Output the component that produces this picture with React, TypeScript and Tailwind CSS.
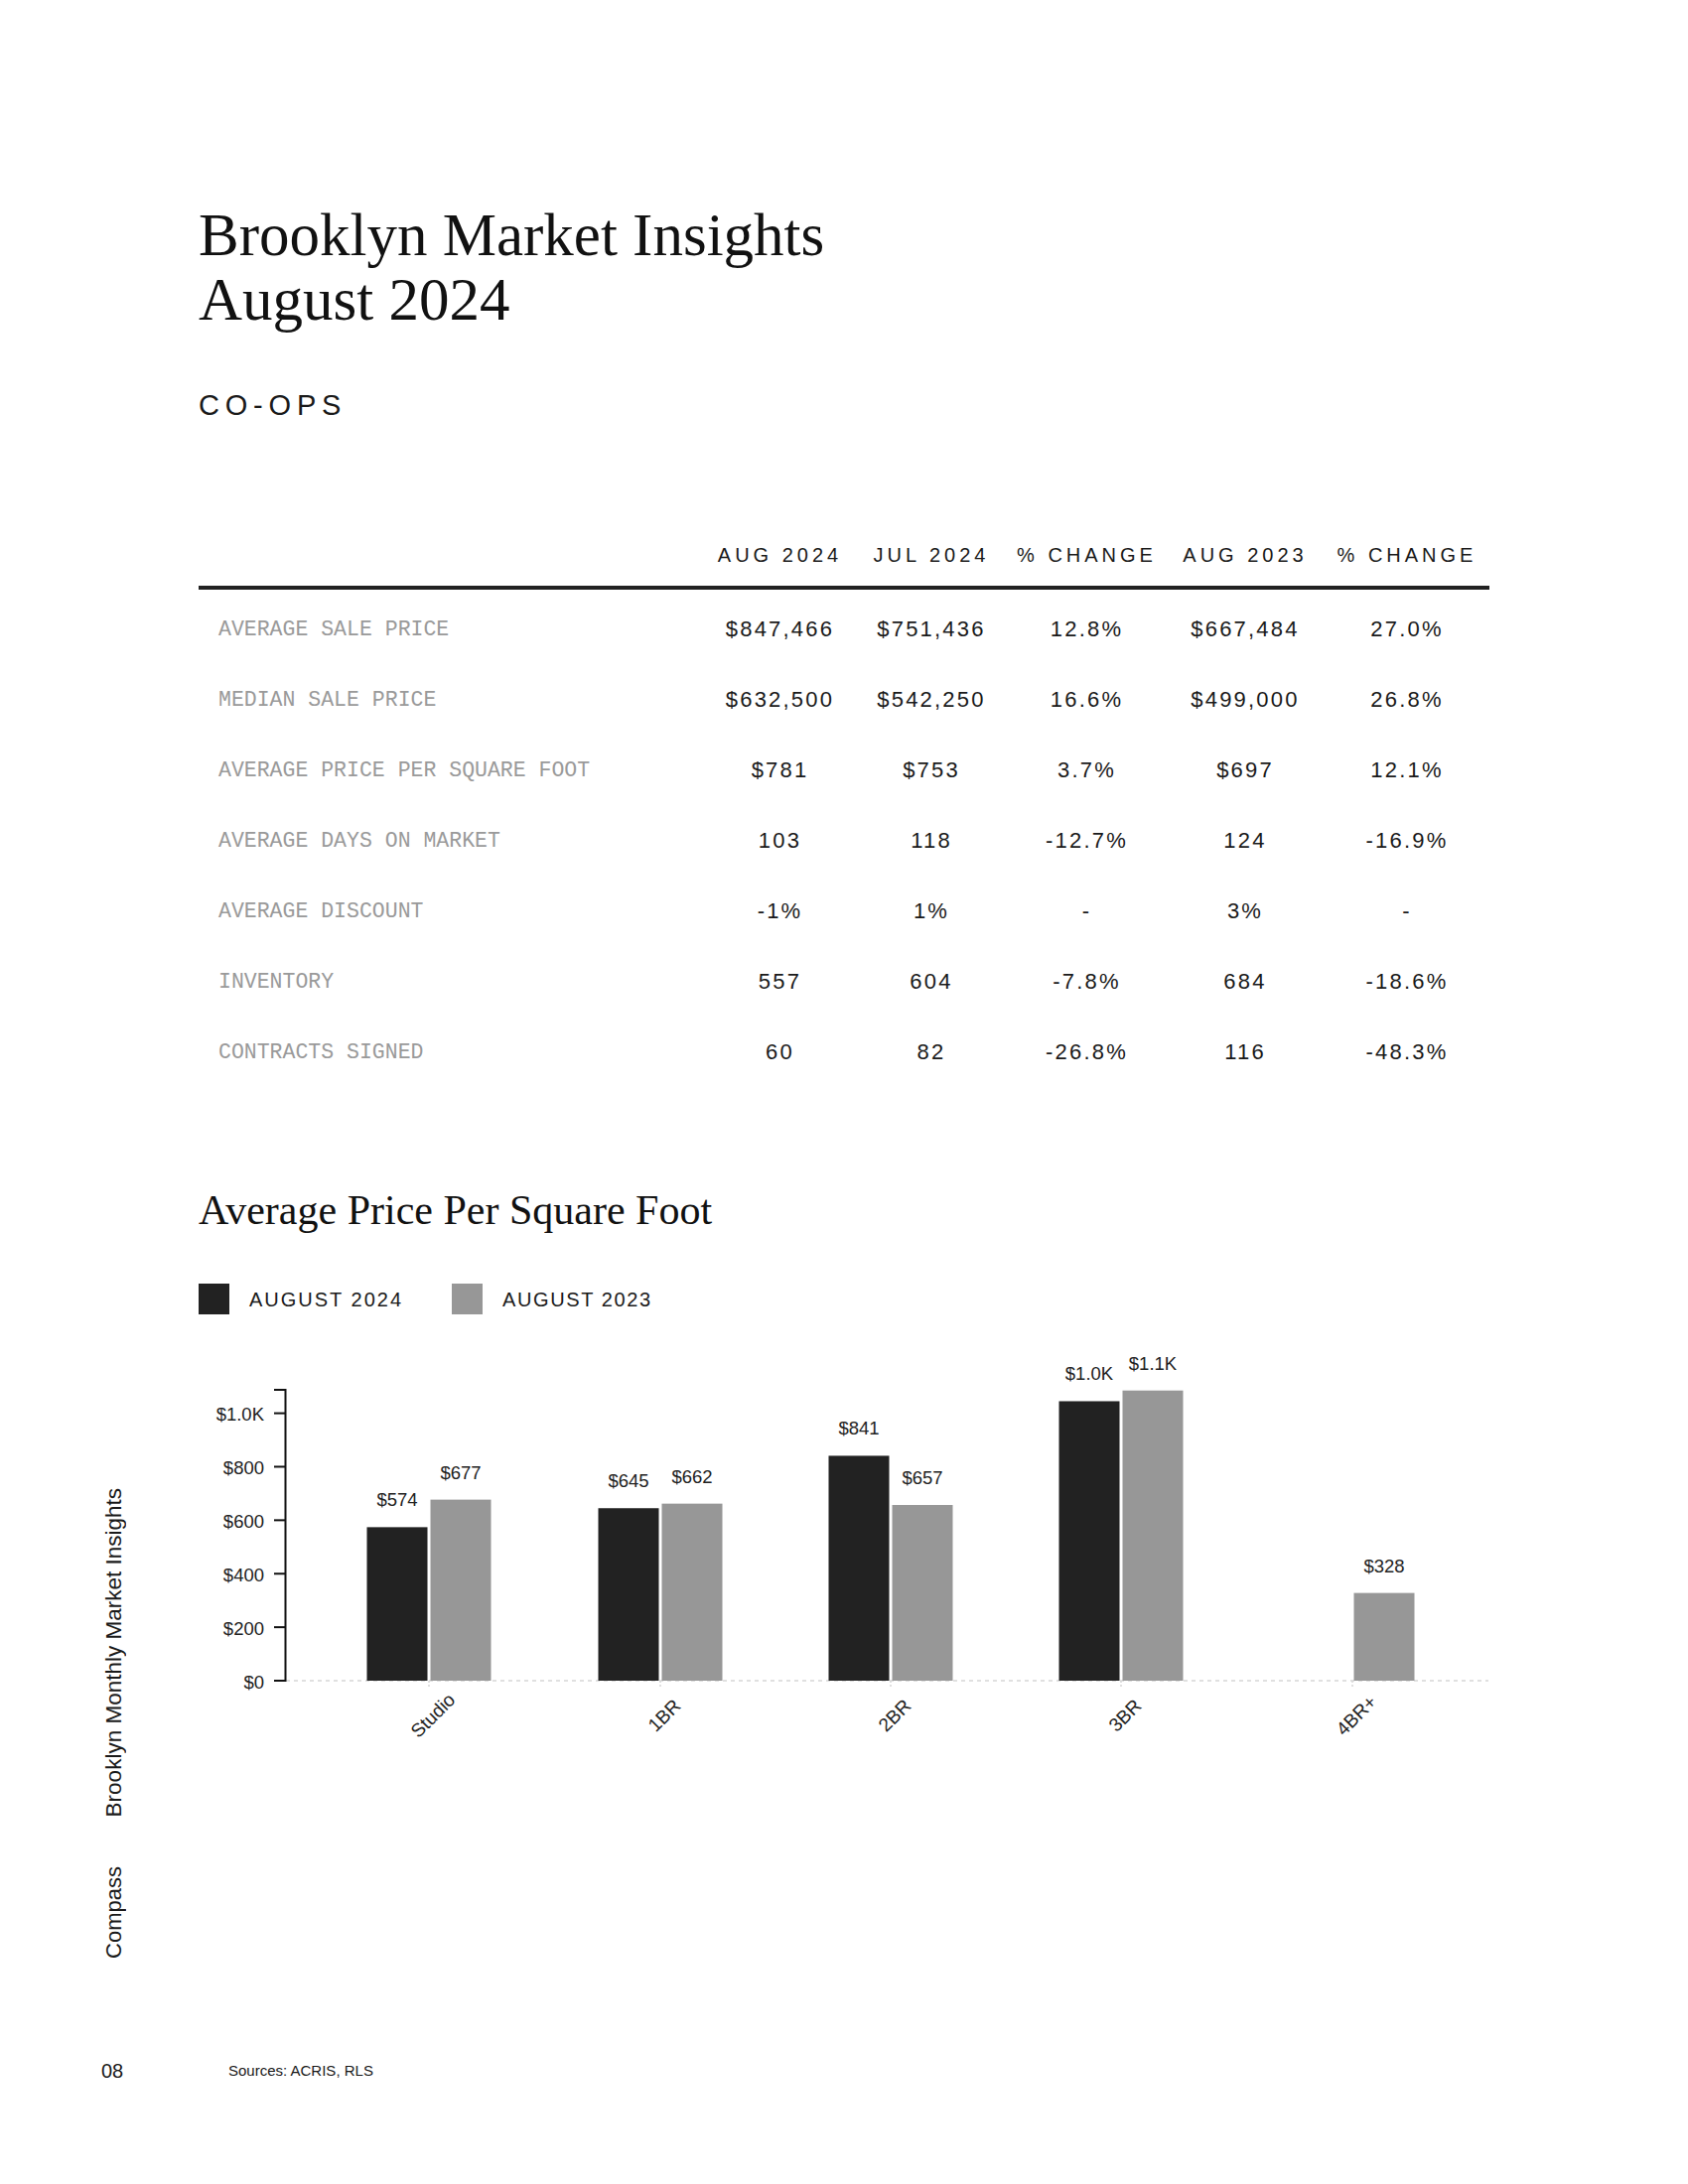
const headers = ["AUG 2024", "JUL 2024", "% CHANGE", "AUG 2023", "% CHANGE"];

const rows = [
  ["AVERAGE SALE PRICE", "$847,466", "$751,436", "12.8%", "$667,484", "27.0%"],
  ["MEDIAN SALE PRICE", "$632,500", "$542,250", "16.6%", "$499,000", "26.8%"],
  ["AVERAGE PRICE PER SQUARE FOOT", "$781", "$753", "3.7%", "$697", "12.1%"],
  ["AVERAGE DAYS ON MARKET", "103", "118", "-12.7%", "124", "-16.9%"],
  ["AVERAGE DISCOUNT", "-1%", "1%", "-", "3%", "-"],
  ["INVENTORY", "557", "604", "-7.8%", "684", "-18.6%"],
  ["CONTRACTS SIGNED", "60", "82", "-26.8%", "116", "-48.3%"],
];

const chartData = [
  { label: "Studio", cur: 574, prev: 677, curText: "$574", prevText: "$677" },
  { label: "1BR", cur: 645, prev: 662, curText: "$645", prevText: "$662" },
  { label: "2BR", cur: 841, prev: 657, curText: "$841", prevText: "$657" },
  { label: "3BR", cur: 1045, prev: 1085, curText: "$1.0K", prevText: "$1.1K" },
  { label: "4BR+", cur: null, prev: 328, curText: "", prevText: "$328" },
];

const gridCols = "grid grid-cols-[510px_151px_154px_159px_160px_166px]";

function Chart() {
  const y0 = 353;
  const k = 0.2694;
  const ticks = [0, 200, 400, 600, 800, 1000];
  const centers = [232, 465, 697, 929, 1162];
  const barW = 61;

  return (
    <svg width={1300} height={440} className="block font-['Liberation_Sans',sans-serif]">
      {/* baseline */}
      <line x1={88} x2={1299} y1={y0} y2={y0} stroke="#d6d6d6" strokeWidth={1.5} strokeDasharray="4 4" />
      {centers.map((c) => (
        <line key={c} x1={c} x2={c} y1={y0} y2={y0 + 8} stroke="#d6d6d6" strokeWidth={1.5} strokeDasharray="2 2" />
      ))}

      {/* bars */}
      {chartData.map((d, i) => {
        const c = centers[i];
        const prevTop = y0 - d.prev * k;
        return (
          <g key={d.label}>
            {d.cur !== null && (
              <>
                <rect x={c - barW - 1.5} y={y0 - d.cur * k} width={barW} height={d.cur * k} fill="#222222" />
                <text x={c - barW / 2 - 1.5} y={y0 - d.cur * k - 26} textAnchor="middle" dominantBaseline="middle" fontSize={18.5} fill="#222">
                  {d.curText}
                </text>
              </>
            )}
            <rect x={c + 1.5} y={prevTop} width={barW} height={d.prev * k} fill="#979797" />
            <text x={c + barW / 2 + 1.5} y={prevTop - 26} textAnchor="middle" dominantBaseline="middle" fontSize={18.5} fill="#222">
              {d.prevText}
            </text>
            <text
              x={c + 5}
              y={389}
              textAnchor="middle"
              dominantBaseline="middle"
              fontSize={19}
              fill="#222"
              transform={`rotate(-45 ${c + 5} 389)`}
            >
              {d.label}
            </text>
          </g>
        );
      })}

      {/* y axis */}
      <path d={`M76,60H87.5V${y0}H76`} fill="none" stroke="#111" strokeWidth={2} />
      {ticks.map((t) => {
        const y = y0 - t * k;
        return (
          <g key={t}>
            <line x1={76} x2={87.5} y1={y} y2={y} stroke="#111" strokeWidth={2} />
            <text x={66} y={y + 3} textAnchor="end" dominantBaseline="middle" fontSize={18.5} fill="#222">
              {t === 1000 ? "$1.0K" : `$${t}`}
            </text>
          </g>
        );
      })}
    </svg>
  );
}

export default function App() {
  return (
    <div className="w-[1700px] h-[2200px] bg-white text-[#1a1a1a] flex flex-col font-['Liberation_Sans',sans-serif]">
      <div className="flex h-[2040px]">
        {/* Side rail */}
        <aside className="w-[200px] pl-[30px] flex flex-col items-center justify-end gap-[50px] pb-[67px]">
          <span className="[writing-mode:vertical-rl] rotate-180 text-[22.5px] leading-[24px]">
            Brooklyn Monthly Market Insights
          </span>
          <span className="[writing-mode:vertical-rl] rotate-180 text-[22px] leading-[24px]">Compass</span>
        </aside>

        <main className="w-[1300px] pt-[204px]">
          {/* Header */}
          <h1 className="font-['Liberation_Serif',serif] text-[61px] leading-[65px] text-[#111]">
            <div>Brooklyn Market Insights</div>
            <div>August 2024</div>
          </h1>
          <div className="mt-[56px] text-[29px] leading-[36px] tracking-[0.2em]">CO-OPS</div>

          {/* Table */}
          <div className="mt-[120px]">
            <div className={`${gridCols} border-b-4 border-[#222] pb-[19px]`}>
              <div />
              {headers.map((h, i) => (
                <div key={i} className="pt-[1px] text-center text-[20px] leading-[24px] tracking-[0.2em]">
                  {h}
                </div>
              ))}
            </div>
            <div className="mt-[3px]">
              {rows.map((r) => (
                <div key={r[0]} className={`${gridCols} h-[71px] items-center`}>
                  <div className="pl-[20px] pt-[4px] font-['Liberation_Mono',monospace] text-[21.5px] text-[#9a9a9a]">{r[0]}</div>
                  {r.slice(1).map((v, i) => (
                    <div key={i} className="pt-[1px] text-center text-[22px] tracking-[0.1em] text-[#1a1a1a]">
                      {v}
                    </div>
                  ))}
                </div>
              ))}
            </div>
          </div>

          {/* Chart */}
          <h2 className="mt-[101px] font-['Liberation_Serif',serif] text-[42px] leading-[48px] text-[#111]">
            Average Price Per Square Foot
          </h2>
          <div className="mt-[50px] flex items-center h-[31px]">
            <div className="w-[31px] h-[31px] bg-[#222222]" />
            <span className="ml-[20px] text-[20px] tracking-[0.1em]">AUGUST 2024</span>
            <div className="ml-[49px] w-[31px] h-[31px] bg-[#979797]" />
            <span className="ml-[20px] text-[20px] tracking-[0.08em]">AUGUST 2023</span>
          </div>
          <div className="mt-[16px]">
            <Chart />
          </div>
        </main>
      </div>

      {/* Footer */}
      <footer className="h-[92px] flex items-center pl-[102px]">
        <span className="w-[128px] text-[20px]">08</span>
        <span className="text-[15px]">Sources: ACRIS, RLS</span>
      </footer>
    </div>
  );
}
